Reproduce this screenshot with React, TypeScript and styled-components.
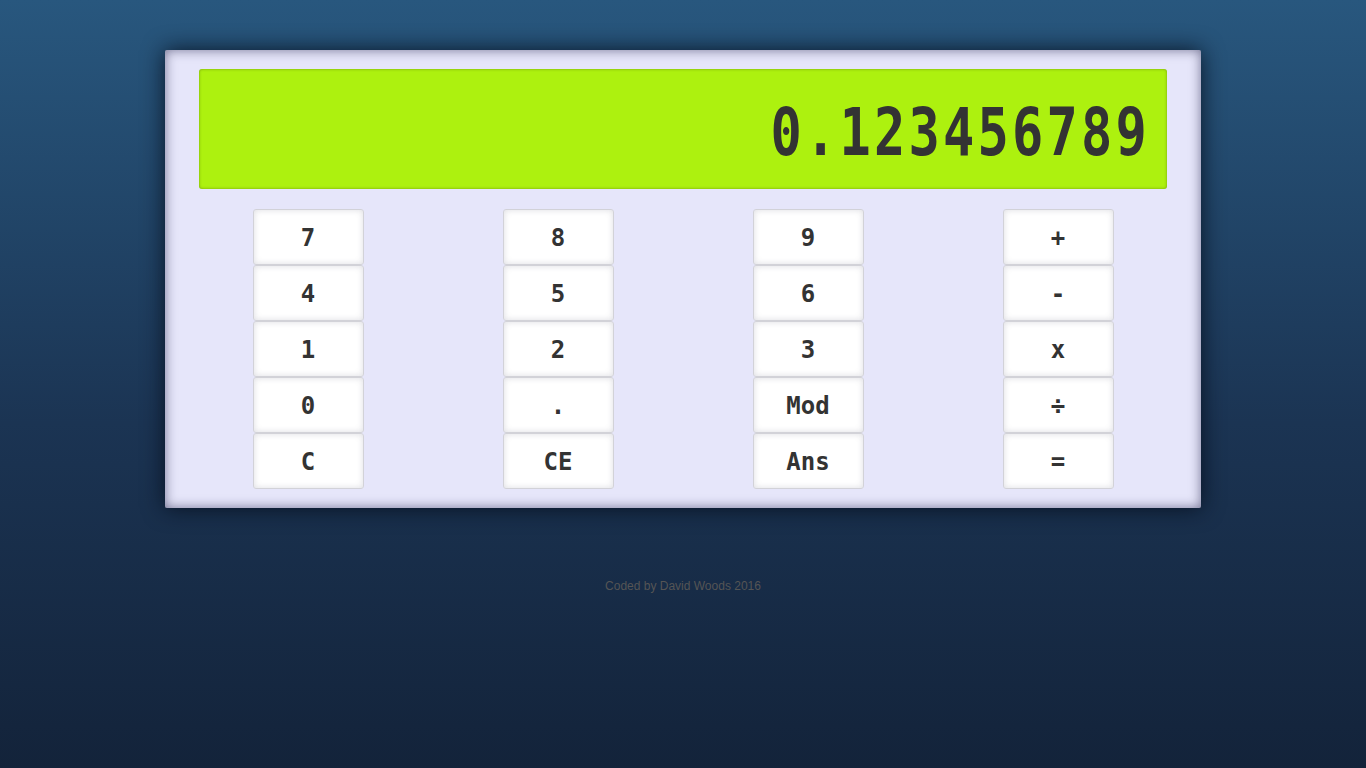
import React, { useState } from "react";
import styled, { createGlobalStyle } from "styled-components";

const GlobalStyle = createGlobalStyle`
  html, body {
    margin: 0;
    padding: 0;
  }

  body {
    min-height: 100vh;
    background: linear-gradient(to bottom, #28577e 0%, #1b3453 55%, #13233a 100%);
    font-family: "Liberation Sans", Arial, sans-serif;
  }
`;

const keys = [
  ["7", "8", "9", "+"],
  ["4", "5", "6", "-"],
  ["1", "2", "3", "x"],
  ["0", ".", "Mod", "÷"],
  ["C", "CE", "Ans", "="],
];

export default function App() {
  const [display] = useState<string>("0.123456789");

  return (
    <StyledPage>
      <GlobalStyle />
      <StyledCalculator>
        <StyledDisplay>
          <StyledReadout>{display}</StyledReadout>
        </StyledDisplay>
        <StyledKeypad>
          {keys.map((row) =>
            row.map((key) => (
              <StyledCell key={key}>
                <StyledKey type="button">{key}</StyledKey>
              </StyledCell>
            ))
          )}
        </StyledKeypad>
      </StyledCalculator>
      <StyledFooter>Coded by David Woods 2016</StyledFooter>
    </StyledPage>
  );
}

const StyledPage = styled.div`
  padding-top: 50px;
  min-height: 100vh;
  box-sizing: border-box;
`;

const StyledCalculator = styled.div`
  width: 1036px;
  box-sizing: border-box;
  margin: 0 auto;
  padding: 19px 18px 19px;
  background: #e6e6fa;
  border-radius: 2px;
  box-shadow: inset 0 0 12px rgba(20, 20, 60, 0.55), 0 0 22px rgba(5, 12, 25, 0.85);
`;

const StyledDisplay = styled.div`
  height: 120px;
  margin: 0 16px;
  padding: 6px 17px 0 0;
  box-sizing: border-box;
  display: flex;
  align-items: center;
  justify-content: flex-end;
  background: #adf10f;
  border-radius: 3px;
  box-shadow: inset 0 0 3px rgba(60, 80, 0, 0.5);
`;

const StyledReadout = styled.span`
  display: inline-block;
  color: #333;
  font-family: "DejaVu Sans Mono", "Liberation Mono", monospace;
  font-weight: bold;
  font-size: 52px;
  letter-spacing: 3.2px;
  line-height: 1;
  transform: scaleY(1.28);
`;

const StyledKeypad = styled.div`
  margin-top: 20px;
  display: grid;
  grid-template-columns: repeat(4, 1fr);
`;

const StyledCell = styled.div`
  display: flex;
  justify-content: center;
`;

const StyledKey = styled.button`
  width: 111px;
  height: 56px;
  padding: 2px 0 0;
  background: #fff;
  border: 1px solid #d2d2d8;
  border-radius: 3px;
  box-shadow: inset 0 0 6px rgba(60, 60, 90, 0.18);
  color: #333;
  font-family: "DejaVu Sans Mono", "Liberation Mono", monospace;
  font-weight: bold;
  font-size: 24px;
  cursor: pointer;
`;

const StyledFooter = styled.div`
  margin-top: 71px;
  text-align: center;
  font-size: 12px;
  color: #555;
`;
